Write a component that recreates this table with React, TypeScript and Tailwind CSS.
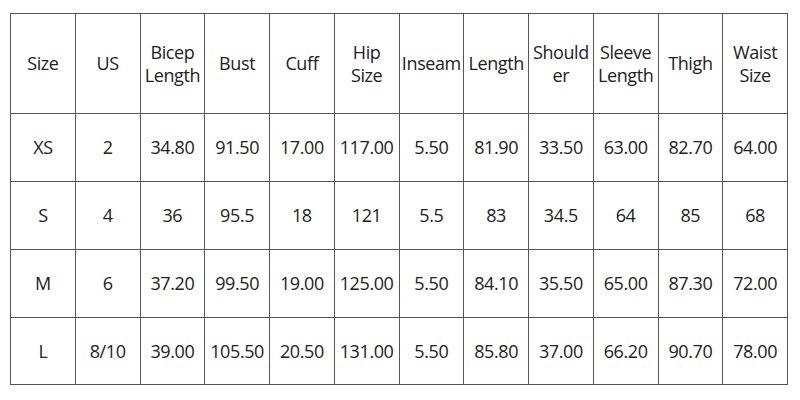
const headers = [
  ['Size'],
  ['US'],
  ['Bicep', 'Length'],
  ['Bust'],
  ['Cuff'],
  ['Hip', 'Size'],
  ['Inseam'],
  ['Length'],
  ['Should', 'er'],
  ['Sleeve', 'Length'],
  ['Thigh'],
  ['Waist', 'Size'],
];

const rows = [
  ['XS', '2', '34.80', '91.50', '17.00', '117.00', '5.50', '81.90', '33.50', '63.00', '82.70', '64.00'],
  ['S', '4', '36', '95.5', '18', '121', '5.5', '83', '34.5', '64', '85', '68'],
  ['M', '6', '37.20', '99.50', '19.00', '125.00', '5.50', '84.10', '35.50', '65.00', '87.30', '72.00'],
  ['L', '8/10', '39.00', '105.50', '20.50', '131.00', '5.50', '85.80', '37.00', '66.20', '90.70', '78.00'],
];

export default function App() {
  return (
    <div className="w-[800px] h-[400px] bg-white pt-[13px] pl-[10px]">
      <table
        className="table-fixed border-collapse w-[778px] text-[18px] text-[#222] text-center"
        style={{ fontFamily: '"Open Sans", "Noto Sans", sans-serif' }}
      >
        <thead>
          <tr className="h-[100px]">
            {headers.map((h, i) => (
              <th key={i} className="border border-[#555] font-normal leading-[23px] p-0 tracking-[-0.4px]">
                {h.map((line, j) => (
                  <div key={j}>{line}</div>
                ))}
              </th>
            ))}
          </tr>
        </thead>
        <tbody>
          {rows.map((r, i) => (
            <tr key={i} className={i === 3 ? 'h-[67px]' : 'h-[68px]'}>
              {r.map((c, j) => (
                <td key={j} className="border border-[#555] p-0 tracking-[-0.4px] whitespace-nowrap">
                  {c}
                </td>
              ))}
            </tr>
          ))}
        </tbody>
      </table>
    </div>
  );
}
